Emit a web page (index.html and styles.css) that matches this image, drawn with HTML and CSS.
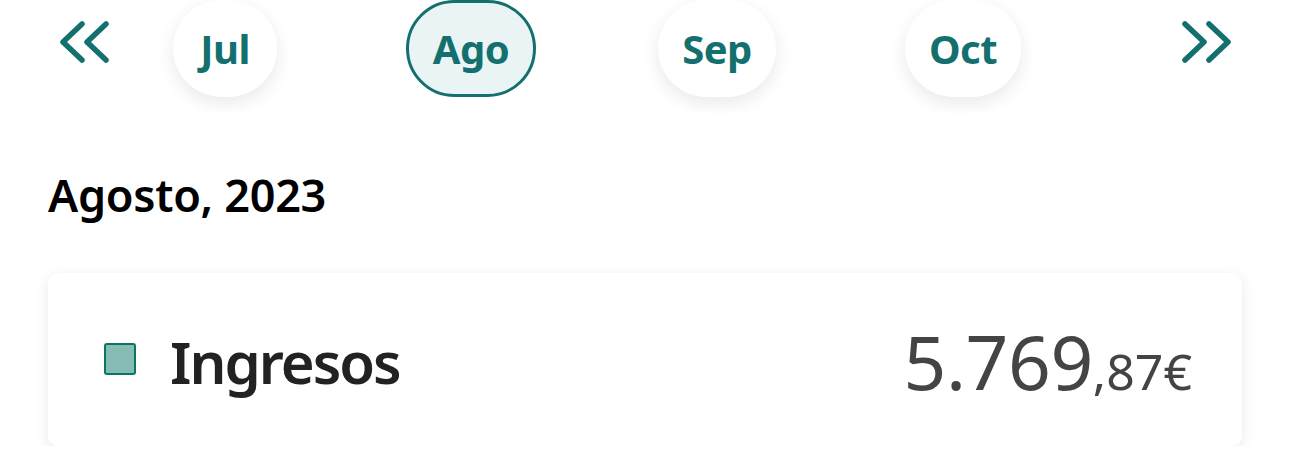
FILE: index.html
```html
<!DOCTYPE html>
<html lang="es">
<head>
<meta charset="utf-8">
<title>Agosto 2023</title>
<link rel="stylesheet" href="styles.css">
</head>
<body>
<div class="months">
  <div class="nav nav-left">
    <svg class="arrow" width="52" height="44" viewBox="0 0 52 44" aria-hidden="true">
      <path d="M24 4 L5 22 L24 40 M48 4 L29 22 L48 40" fill="none" stroke="#13706f" stroke-width="5.5" stroke-linecap="round" stroke-linejoin="round"/>
    </svg>
  </div>
  <div class="strip">
    <div class="track">
      <div class="cell"><span class="chip">Jul</span></div>
      <div class="cell"><span class="chip active">Ago</span></div>
      <div class="cell"><span class="chip">Sep</span></div>
      <div class="cell"><span class="chip">Oct</span></div>
    </div>
  </div>
  <div class="nav nav-right">
    <svg class="arrow" width="52" height="44" viewBox="0 0 52 44" aria-hidden="true">
      <path d="M4 4 L23 22 L4 40 M28 4 L47 22 L28 40" fill="none" stroke="#13706f" stroke-width="5.5" stroke-linecap="round" stroke-linejoin="round"/>
    </svg>
  </div>
</div>

<h2 class="title">Agosto, 2023</h2>

<div class="card">
  <span class="swatch"></span>
  <span class="label">Ingresos</span>
  <span class="amount"><span class="int">5.769</span><span class="dec">,87€</span></span>
</div>
</body>
</html>
```

FILE: styles.css
```css
* { box-sizing: border-box; }

body {
  margin: 0;
  background: #ffffff;
  font-family: "Noto Sans", "Open Sans", sans-serif;
}

.months {
  display: flex;
  height: 113px;
}

.nav {
  flex: 0 0 153px;
  display: flex;
}

.nav-left {
  padding: 20px 0 0 58px;
}

.nav-right {
  padding: 20px 0 0 44px;
}

.strip {
  flex: 0 0 984px;
  overflow: hidden;
  height: 113px;
}

.track {
  display: flex;
  margin-left: -51px;
}

.cell {
  flex: 0 0 246px;
  display: flex;
  justify-content: center;
}

.chip {
  height: 97px;
  min-width: 104px;
  padding: 0 24px;
  border-radius: 49px;
  background: #ffffff;
  box-shadow: 0 6px 18px rgba(0, 0, 0, 0.09);
  display: flex;
  align-items: center;
  justify-content: center;
  color: #13706f;
  font-weight: 700;
  font-size: 40px;
  letter-spacing: -0.5px;
}

.chip.active {
  background: #ebf4f5;
  border: 3px solid #13706f;
  box-shadow: none;
}

.title {
  margin: 52px 48px 0;
  font-size: 45px;
  line-height: 60px;
  font-weight: 600;
  color: #000000;
  letter-spacing: -0.3px;
}

.card {
  margin: 48px 48px 0;
  height: 173px;
  border-radius: 10px;
  background: #ffffff;
  box-shadow: 0 3px 14px rgba(0, 0, 0, 0.09);
  display: flex;
  align-items: center;
  padding: 4px 50px 0 56px;
}

.swatch {
  flex: 0 0 32px;
  height: 32px;
  background: #86bcb3;
  border: 2.5px solid #0a7563;
  border-radius: 3px;
  margin-right: 34px;
  margin-top: -6px;
}

.label {
  flex: 1;
  font-size: 58px;
  font-weight: 600;
  color: #222222;
  letter-spacing: -2px;
  line-height: 1;
}

.amount {
  color: #444444;
  line-height: 1;
}

.int {
  font-size: 75px;
  font-weight: 400;
  letter-spacing: -0.5px;
}

.dec {
  font-size: 50px;
  font-weight: 400;
}
```
